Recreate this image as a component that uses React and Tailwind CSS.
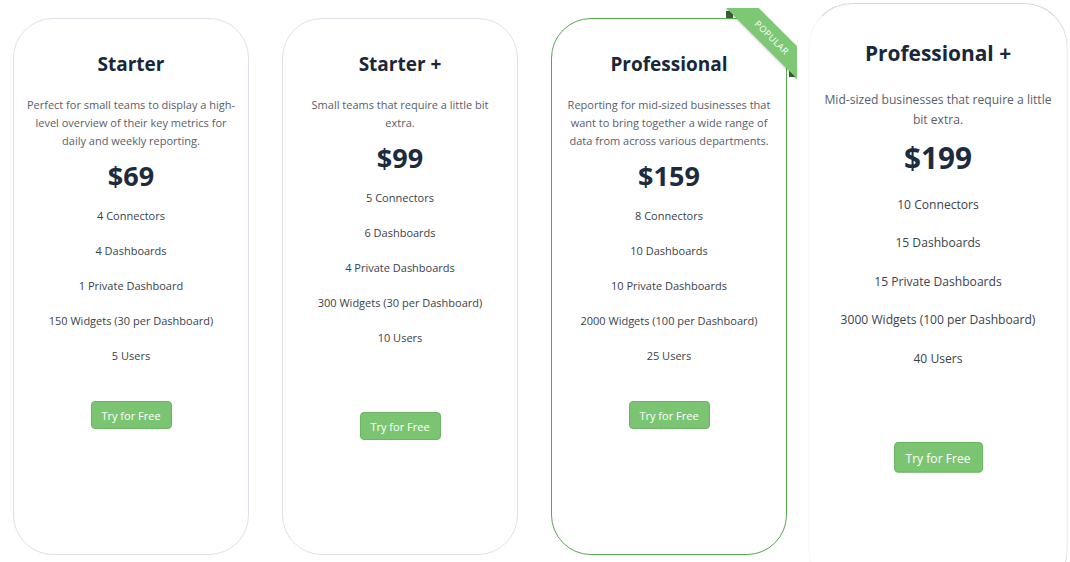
import React from 'react';

const plans = [
    {
        name: 'Starter',
        desc: 'Perfect for small teams to display a high-level overview of their key metrics for daily and weekly reporting.',
        price: '$69',
        features: ['4 Connectors', '4 Dashboards', '1 Private Dashboard', '150 Widgets (30 per Dashboard)', '5 Users'],
        descCls: 'mt-[19px] max-w-[210px]',
        listCls: 'mt-[4px]',
        btn: 'mt-[28px]',
    },
    {
        name: 'Starter +',
        desc: 'Small teams that require a little bit extra.',
        price: '$99',
        features: ['5 Connectors', '6 Dashboards', '4 Private Dashboards', '300 Widgets (30 per Dashboard)', '10 Users'],
        descCls: 'mt-[19px] max-w-[195px]',
        listCls: 'mt-[4px]',
        btn: 'mt-[57px]',
    },
    {
        name: 'Professional',
        desc: 'Reporting for mid-sized businesses that want to bring together a wide range of data from across various departments.',
        price: '$159',
        features: ['8 Connectors', '10 Dashboards', '10 Private Dashboards', '2000 Widgets (100 per Dashboard)', '25 Users'],
        descCls: 'mt-[19px] max-w-[210px]',
        listCls: 'mt-[4px]',
        btn: 'mt-[28px]',
        popular: true,
    },
    {
        name: 'Professional +',
        desc: 'Mid-sized businesses that require a little bit extra.',
        price: '$199',
        features: ['10 Connectors', '15 Dashboards', '15 Private Dashboards', '3000 Widgets (100 per Dashboard)', '40 Users'],
        descCls: 'mt-[20px] max-w-[212px]',
        listCls: 'mt-[6px]',
        btn: 'mt-[59px]',
        hovered: true,
    },
];

// corner ribbon on the popular plan
const Ribbon = () => (
    <div className="absolute -top-[11px] -right-[11px] w-[71px] h-[71px] overflow-hidden pointer-events-none">
        <div className="absolute left-0 top-[3px] w-[7px] h-[7px] bg-[#3b5f35]"></div>
        <div className="absolute left-[63px] top-[61px] w-[8px] h-[8px] bg-[#3b5f35]"></div>
        <div className="absolute -left-[14px] top-[18px] w-[120px] h-[23px] rotate-45 bg-[#7dc874] flex items-center justify-center shadow-[0_1px_2px_rgba(0,0,0,0.2)]">
            <span className="text-[9px] leading-none tracking-[0.5px] text-white uppercase">Popular</span>
        </div>
    </div>
);

const PlanCard = ({ plan }) => {
    let border = 'border border-[#dde2ea]';
    if (plan.popular) border = 'border border-[#55ab4b]';
    if (plan.hovered) border = 'border border-[#dde2ea] border-t-[#d3dae6] border-l-[#f4f6f9]';

    return (
        <div
            className={
                'relative w-[236px] h-[537px] shrink-0 rounded-[40px] bg-white px-[10px] pt-[32px] flex flex-col items-center text-center ' +
                border +
                (plan.hovered ? ' scale-110 origin-[50%_150px] z-10' : '')
            }
        >
            {plan.popular && <Ribbon />}
            <h2 className="text-[19px] leading-[26px] font-bold text-[#182739]">{plan.name}</h2>
            <p className={'text-[11px] leading-[18px] text-[#58606c] ' + plan.descCls}>{plan.desc}</p>
            <div className="mt-[8px] text-[27px] leading-[36px] font-bold text-[#1c2b3d]">{plan.price}</div>
            <ul className={'w-full ' + plan.listCls}>
                {plan.features.map((f) => (
                    <li key={f} className="text-[11px] leading-[35px] text-[#3a424d]">{f}</li>
                ))}
            </ul>
            <button
                className={
                    'w-[81px] h-[28px] rounded-[4px] bg-[#7bc572] border border-[#6db564] text-white text-[11px] leading-none ' +
                    plan.btn
                }
            >
                Try for Free
            </button>
        </div>
    );
};

export default function App() {
    return (
        <div
            className="w-[1070px] h-[562px] overflow-hidden bg-white pl-[13px] pt-[18px] flex gap-[33px]"
            style={{ fontFamily: '"Open Sans", "Noto Sans", sans-serif' }}
        >
            {plans.map((p) => (
                <PlanCard key={p.name} plan={p} />
            ))}
        </div>
    );
}
